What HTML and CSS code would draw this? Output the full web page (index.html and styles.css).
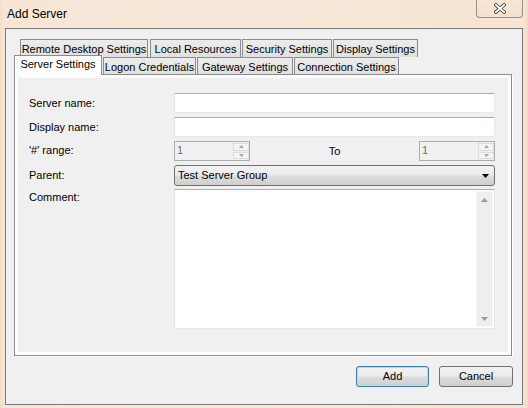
FILE: index.html
```html
<!DOCTYPE html>
<html>
<head>
<meta charset="utf-8">
<title>Add Server</title>
<link rel="stylesheet" href="styles.css">
</head>
<body>
<div class="window">
  <div class="titlebar">
    <span class="title">Add Server</span>
    <div class="close">
      <svg width="12" height="11" viewBox="0 0 12 11">
        <path d="M2 2 L10 9 M10 2 L2 9" stroke="#4a4a4a" stroke-width="3.6" stroke-linecap="square" fill="none"/>
        <path d="M2 2 L10 9 M10 2 L2 9" stroke="#ffffff" stroke-width="1.8" stroke-linecap="square" fill="none"/>
      </svg>
    </div>
  </div>
  <div class="client">
    <div class="tabrow back">
      <div class="tab w-rds">Remote Desktop Settings</div>
      <div class="tab w-lr">Local Resources</div>
      <div class="tab w-sec">Security Settings</div>
      <div class="tab w-disp">Display Settings</div>
    </div>
    <div class="tabrow front">
      <div class="tab sel w-srv">Server Settings</div>
      <div class="tab w-logon">Logon Credentials</div>
      <div class="tab w-gw">Gateway Settings</div>
      <div class="tab w-conn">Connection Settings</div>
    </div>
    <div class="panel">
      <div class="page">
        <div class="form">
          <div class="lbl">Server name:</div>
          <div class="textbox"></div>
          <div class="lbl">Display name:</div>
          <div class="textbox"></div>
          <div class="lbl lbl-range">'#' range:</div>
          <div class="range">
            <div class="spin">
              <span class="spinval">1</span>
              <div class="spinbtns">
                <div class="spinbtn"><svg width="5" height="3" viewBox="0 0 5 3"><path d="M0 3 L2.5 0 L5 3 Z" fill="#a8a8a8"/></svg></div>
                <div class="spinbtn"><svg width="5" height="3" viewBox="0 0 5 3"><path d="M0 0 L5 0 L2.5 3 Z" fill="#a8a8a8"/></svg></div>
              </div>
            </div>
            <span class="to">To</span>
            <div class="spin">
              <span class="spinval">1</span>
              <div class="spinbtns">
                <div class="spinbtn"><svg width="5" height="3" viewBox="0 0 5 3"><path d="M0 3 L2.5 0 L5 3 Z" fill="#a8a8a8"/></svg></div>
                <div class="spinbtn"><svg width="5" height="3" viewBox="0 0 5 3"><path d="M0 0 L5 0 L2.5 3 Z" fill="#a8a8a8"/></svg></div>
              </div>
            </div>
          </div>
          <div class="lbl">Parent:</div>
          <div class="combo">
            <span class="combotext">Test Server Group</span>
            <svg class="comboarrow" width="7" height="4" viewBox="0 0 7 4"><path d="M0 0 L7 0 L3.5 4 Z" fill="#000"/></svg>
          </div>
          <div class="lbl lbl-comment">Comment:</div>
          <div class="memo">
            <div class="vscroll">
              <svg width="7" height="4" viewBox="0 0 7 4"><path d="M0 4 L3.5 0 L7 4 Z" fill="#9a9a9a"/></svg>
              <svg width="7" height="4" viewBox="0 0 7 4"><path d="M0 0 L7 0 L3.5 4 Z" fill="#9a9a9a"/></svg>
            </div>
          </div>
        </div>
      </div>
    </div>
    <div class="buttons">
      <button class="btn btn-default w-add">Add</button>
      <button class="btn w-cancel">Cancel</button>
    </div>
  </div>
</div>
</body>
</html>
```
FILE: styles.css
```css
* { box-sizing: border-box; }

html, body {
  margin: 0;
  padding: 0;
}

body {
  width: 528px;
  height: 408px;
  overflow: hidden;
  font-family: "Liberation Sans", Arial, sans-serif;
  font-size: 11px;
  color: #000;
}

.window {
  width: 528px;
  height: 408px;
  padding: 0 5px;
  background: linear-gradient(90deg, #f6dcc4 0px, #f7e6d6 4px, #f8e8d9 50%, #f7e4d2 524px, #f3d9c2 528px);
  display: flex;
  flex-direction: column;
}

.titlebar {
  height: 28px;
  display: flex;
  justify-content: space-between;
  align-items: flex-start;
}

.title {
  margin-left: 2px;
  margin-top: 7px;
  font-size: 12px;
  line-height: 14px;
}

.close {
  width: 47px;
  height: 18px;
  border: 1px solid #9a8f87;
  border-top: none;
  border-radius: 0 0 4px 4px;
  background: linear-gradient(#f7e7d8, #f3e0ce);
  display: flex;
  align-items: center;
  justify-content: center;
}

.client {
  height: 377px;
  border: 1px solid #787878;
  background: #f0f0f0;
  padding: 10px 9px 17px 8px;
  display: flex;
  flex-direction: column;
}

.tabrow {
  display: flex;
  align-items: flex-start;
}

.back {
  height: 18px;
  margin-left: 6px;
}

.front {
  height: 17px;
}

.tab {
  border: 1px solid #898c95;
  border-bottom: none;
  background: linear-gradient(#ececec, #e0e0e0);
  line-height: 16px;
  padding-top: 1px;
  text-align: center;
  white-space: nowrap;
  margin-right: 1px;
}

.back .tab { height: 18px; }
.front .tab { height: 17px; }

.front .tab.sel {
  position: relative;
  z-index: 2;
  height: 20px;
  margin-top: -2px;
  padding-top: 0;
  background: #fff;
}

.w-rds { width: 128px; margin-right: 2px; }
.w-lr { width: 91px; }
.w-sec { width: 90px; }
.w-disp { width: 85px; }
.w-srv { width: 88px; }
.w-logon { width: 93px; }
.w-gw { width: 96px; }
.w-conn { width: 105px; }

.panel {
  height: 282px;
  margin-right: 1px;
  border: 1px solid #898c95;
  background: #fff;
  padding: 3px;
  box-shadow: 1px 1px 0 #fff;
}

.page {
  height: 100%;
  background: #f0f0f0;
  padding: 15px 13px 0 11px;
}

.form {
  display: grid;
  grid-template-columns: 145px 1fr;
  grid-template-rows: 20px 20px 20px 20px 140px;
  row-gap: 4px;
}

.lbl {
  line-height: 13px;
  padding-top: 4px;
}

.lbl-range { padding-top: 3px; }
.lbl-comment { padding-top: 2px; }

.textbox {
  height: 20px;
  background: #fff;
  border: 1px solid;
  border-color: #abadb3 #e3e9ef #e3e9ef #e2e3ea;
  border-radius: 1px;
}

.range {
  display: flex;
  justify-content: space-between;
  align-items: flex-start;
}

.to {
  line-height: 13px;
  padding-top: 4px;
}

.spin {
  width: 76px;
  height: 20px;
  border: 1px solid #adadad;
  background: #f0f0f0;
  display: flex;
}

.spinval {
  color: #6d6d6d;
  line-height: 13px;
  padding: 2px 0 0 2px;
}

.spinbtns {
  margin-left: auto;
  width: 16px;
  display: flex;
  flex-direction: column;
  padding: 1px 0 0 0;
}

.spinbtn {
  height: 8px;
  margin-bottom: 1px;
  border: 1px solid #dcdcdc;
  background: #f4f4f4;
  display: flex;
  align-items: center;
  justify-content: center;
}

.combo {
  height: 21px;
  border: 1px solid #707070;
  border-radius: 3px;
  background: linear-gradient(#f2f2f2 0%, #ebebeb 48%, #dddddd 52%, #cfcfcf 100%);
  display: flex;
  align-items: flex-start;
}

.combotext {
  line-height: 13px;
  padding: 3px 0 0 3px;
}

.comboarrow {
  margin: 8px 5px 0 auto;
}

.memo {
  height: 140px;
  background: #fff;
  border: 1px solid;
  border-color: #abadb3 #e3e9ef #e3e9ef #e2e3ea;
  border-radius: 1px;
  padding: 1px;
  display: flex;
  justify-content: flex-end;
}

.vscroll {
  width: 17px;
  height: 100%;
  background: #eeeeee;
  border: 1px solid #f6f6f6;
  display: flex;
  flex-direction: column;
  justify-content: space-between;
  align-items: center;
  padding: 6px 0 5px;
}

.buttons {
  margin-top: 10px;
  display: flex;
  justify-content: flex-end;
  gap: 10px;
}

.btn {
  height: 21px;
  padding: 0 0 1px;
  font-family: "Liberation Sans", Arial, sans-serif;
  font-size: 11px;
  color: #000;
  border: 1px solid #707070;
  border-radius: 3px;
  background: linear-gradient(#f2f2f2 0%, #ebebeb 48%, #dddddd 52%, #cfcfcf 100%);
}

.btn-default {
  border-color: #3c7fb1;
  box-shadow: inset 0 0 0 1px #a6dff8;
}

.w-add { width: 73px; }
.w-cancel { width: 74px; }
```
